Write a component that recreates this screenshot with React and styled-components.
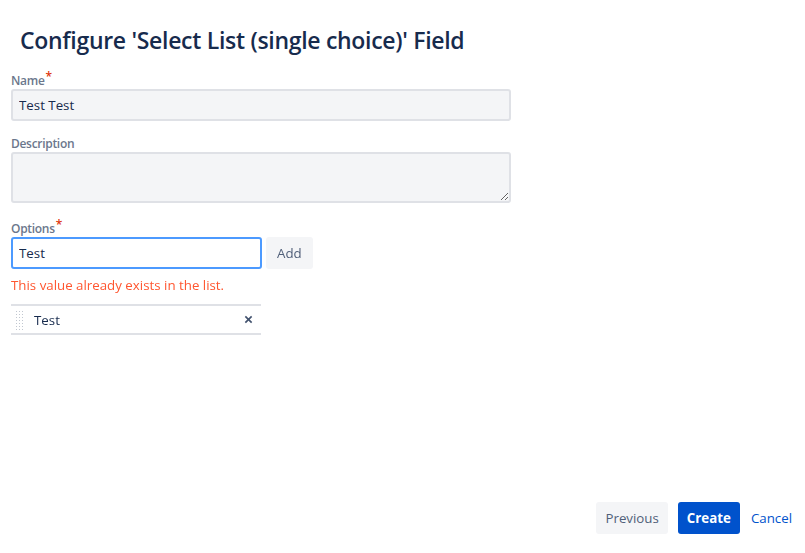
import React, { useState } from "react";
import styled, { createGlobalStyle } from "styled-components";

// Global reset
const GlobalStyle = createGlobalStyle`
  html, body {
    margin: 0;
    padding: 0;
    background: #fff;
  }
  body {
    font-family: "Open Sans", "Noto Sans", sans-serif;
    color: #172b4d;
  }
`;

const Page = styled.div`
  box-sizing: border-box;
  height: 553px;
  display: flex;
  flex-direction: column;
  padding: 0 12px 19px 11px;
`;

const Title = styled.h2`
  margin: 24px 0 0 9px;
  font-size: 23px;
  font-weight: 600;
  line-height: 32px;
  color: #172b4d;
  letter-spacing: -0.3px;
`;

const Field = styled.div`
  display: flex;
  flex-direction: column;
  margin-top: ${(p) => p.top || 0}px;
`;

const Label = styled.label`
  font-size: 12px;
  font-weight: 600;
  line-height: 12px;
  color: #6b778c;
  height: 12px;
  margin-bottom: 2px;
  letter-spacing: -0.3px;
`;

const Required = styled.span`
  color: #de350b;
  font-size: 12px;
  position: relative;
  top: -4px;
  margin-left: 1px;
`;

const TextInput = styled.input`
  box-sizing: border-box;
  width: ${(p) => p.width || 500}px;
  height: 32px;
  padding: 0 6px;
  font-family: inherit;
  font-size: 13.3px;
  color: #172b4d;
  background: ${(p) => (p.focused ? "#fff" : "#f4f5f7")};
  border: 2px solid ${(p) => (p.focused ? "#4c9aff" : "#dfe1e6")};
  border-radius: 3px;
  outline: none;
`;

const TextArea = styled.textarea`
  box-sizing: border-box;
  width: 500px;
  height: 51px;
  padding: 6px;
  font-family: inherit;
  font-size: 13.3px;
  background: #f4f5f7;
  border: 2px solid #dfe1e6;
  border-radius: 3px;
  outline: none;
  resize: vertical;
  display: block;
`;

const InputRow = styled.div`
  display: flex;
  gap: 4px;
  align-items: center;
`;

const Button = styled.button`
  box-sizing: border-box;
  height: 32px;
  padding: 0 ${(p) => (p.variant === "link" ? 1 : p.wide ? 11 : 9)}px;
  border: none;
  border-radius: 3px;
  font-family: inherit;
  font-size: 13.3px;
  cursor: pointer;
  background: ${(p) =>
    p.variant === "primary" ? "#0052cc" : p.variant === "link" ? "transparent" : "#f4f5f7"};
  color: ${(p) =>
    p.variant === "primary" ? "#fff" : p.variant === "link" ? "#0052cc" : "#505f79"};
  font-weight: ${(p) => (p.variant === "primary" ? 700 : 400)};
`;

const ErrorText = styled.div`
  margin-top: 6px;
  font-size: 13.3px;
  line-height: 20px;
  color: #ff5630;
`;

const OptionList = styled.ul`
  list-style: none;
  margin: 9px 0 0;
  padding: 0;
  width: 250px;
  border-top: 2px solid #dfe1e6;
`;

const OptionItem = styled.li`
  display: flex;
  align-items: center;
  height: 27px;
  border-bottom: 2px solid #dfe1e6;
  font-size: 13.3px;
  color: #172b4d;
`;

const Handle = styled.span`
  width: 9px;
  height: 20px;
  margin: 0 10px 0 4px;
  background-image: radial-gradient(circle, #c1c7d0 0.8px, transparent 1px);
  background-size: 3px 3px;
`;

const OptionText = styled.span`
  flex: 1;
`;

const Remove = styled.span`
  width: 20px;
  display: flex;
  justify-content: center;
  color: #42526e;
  margin-right: 3px;
`;

const Footer = styled.div`
  margin-top: auto;
  display: flex;
  justify-content: flex-end;
  gap: 10px;
`;

const App = () => {
  const [name, setName] = useState("Test Test");
  const [option, setOption] = useState("Test");

  return (
    <>
      <GlobalStyle />
      <Page>
        <Title>Configure 'Select List (single choice)' Field</Title>

        <Field top={19}>
          <Label>
            Name<Required>*</Required>
          </Label>
          <TextInput value={name} onChange={(e) => setName(e.target.value)} />
        </Field>

        <Field top={17}>
          <Label>Description</Label>
          <TextArea />
        </Field>

        <Field top={20}>
          <Label>
            Options<Required>*</Required>
          </Label>
          <InputRow>
            <TextInput
              width={251}
              focused
              autoFocus
              value={option}
              onChange={(e) => setOption(e.target.value)}
            />
            <Button wide>Add</Button>
          </InputRow>
          <ErrorText>This value already exists in the list.</ErrorText>
          <OptionList>
            <OptionItem>
              <Handle />
              <OptionText>Test</OptionText>
              <Remove>
                <svg width="9" height="9" viewBox="0 0 10 10">
                  <path d="M1.5 1.5l7 7M8.5 1.5l-7 7" stroke="currentColor" strokeWidth="1.8" />
                </svg>
              </Remove>
            </OptionItem>
          </OptionList>
        </Field>

        <Footer>
          <Button>Previous</Button>
          <Button variant="primary">Create</Button>
          <Button variant="link">Cancel</Button>
        </Footer>
      </Page>
    </>
  );
};

export default App;
